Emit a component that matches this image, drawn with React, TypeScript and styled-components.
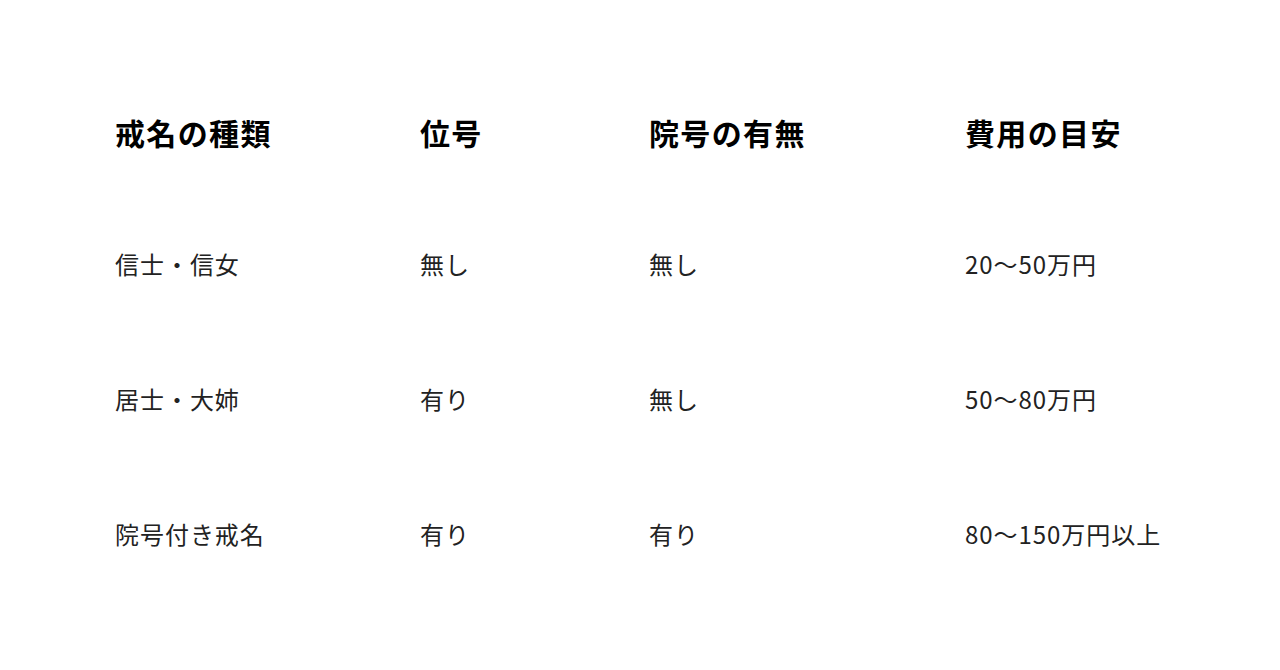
import React from "react";
import styled, { createGlobalStyle } from "styled-components";

const GlobalStyle = createGlobalStyle`
  html, body {
    margin: 0;
    padding: 0;
    background: #ffffff;
  }
  body {
    font-family: "Noto Sans CJK JP", "Noto Sans", sans-serif;
    color: #111;
  }
`;

const Page = styled.div`
  width: 1280px;
  height: 670px;
  padding: 67px 0 0 115px;
  box-sizing: border-box;
`;

const Table = styled.div`
  display: grid;
  grid-template-columns: 305px 229px 316px 220px;
  grid-template-rows: 129px repeat(3, 135px);
`;

const Cell = styled.div<{ $head?: boolean }>`
  display: flex;
  align-items: center;
  font-size: ${(p) => (p.$head ? "30px" : "24px")};
  font-weight: ${(p) => (p.$head ? 700 : 400)};
  letter-spacing: ${(p) => (p.$head ? "0.045em" : "0.04em")};
  color: ${(p) => (p.$head ? "#000" : "#222")};
  white-space: nowrap;
`;

const head = ["戒名の種類", "位号", "院号の有無", "費用の目安"];
const rows = [
  ["信士・信女", "無し", "無し", "20〜50万円"],
  ["居士・大姉", "有り", "無し", "50〜80万円"],
  ["院号付き戒名", "有り", "有り", "80〜150万円以上"],
];

export default function App() {
  return (
    <>
      <GlobalStyle />
      <Page>
        <Table>
          {head.map((h) => (
            <Cell $head key={h}>
              {h}
            </Cell>
          ))}
          {rows.map((r, i) =>
            r.map((c, j) => <Cell key={`${i}-${j}`}>{c}</Cell>)
          )}
        </Table>
      </Page>
    </>
  );
}
